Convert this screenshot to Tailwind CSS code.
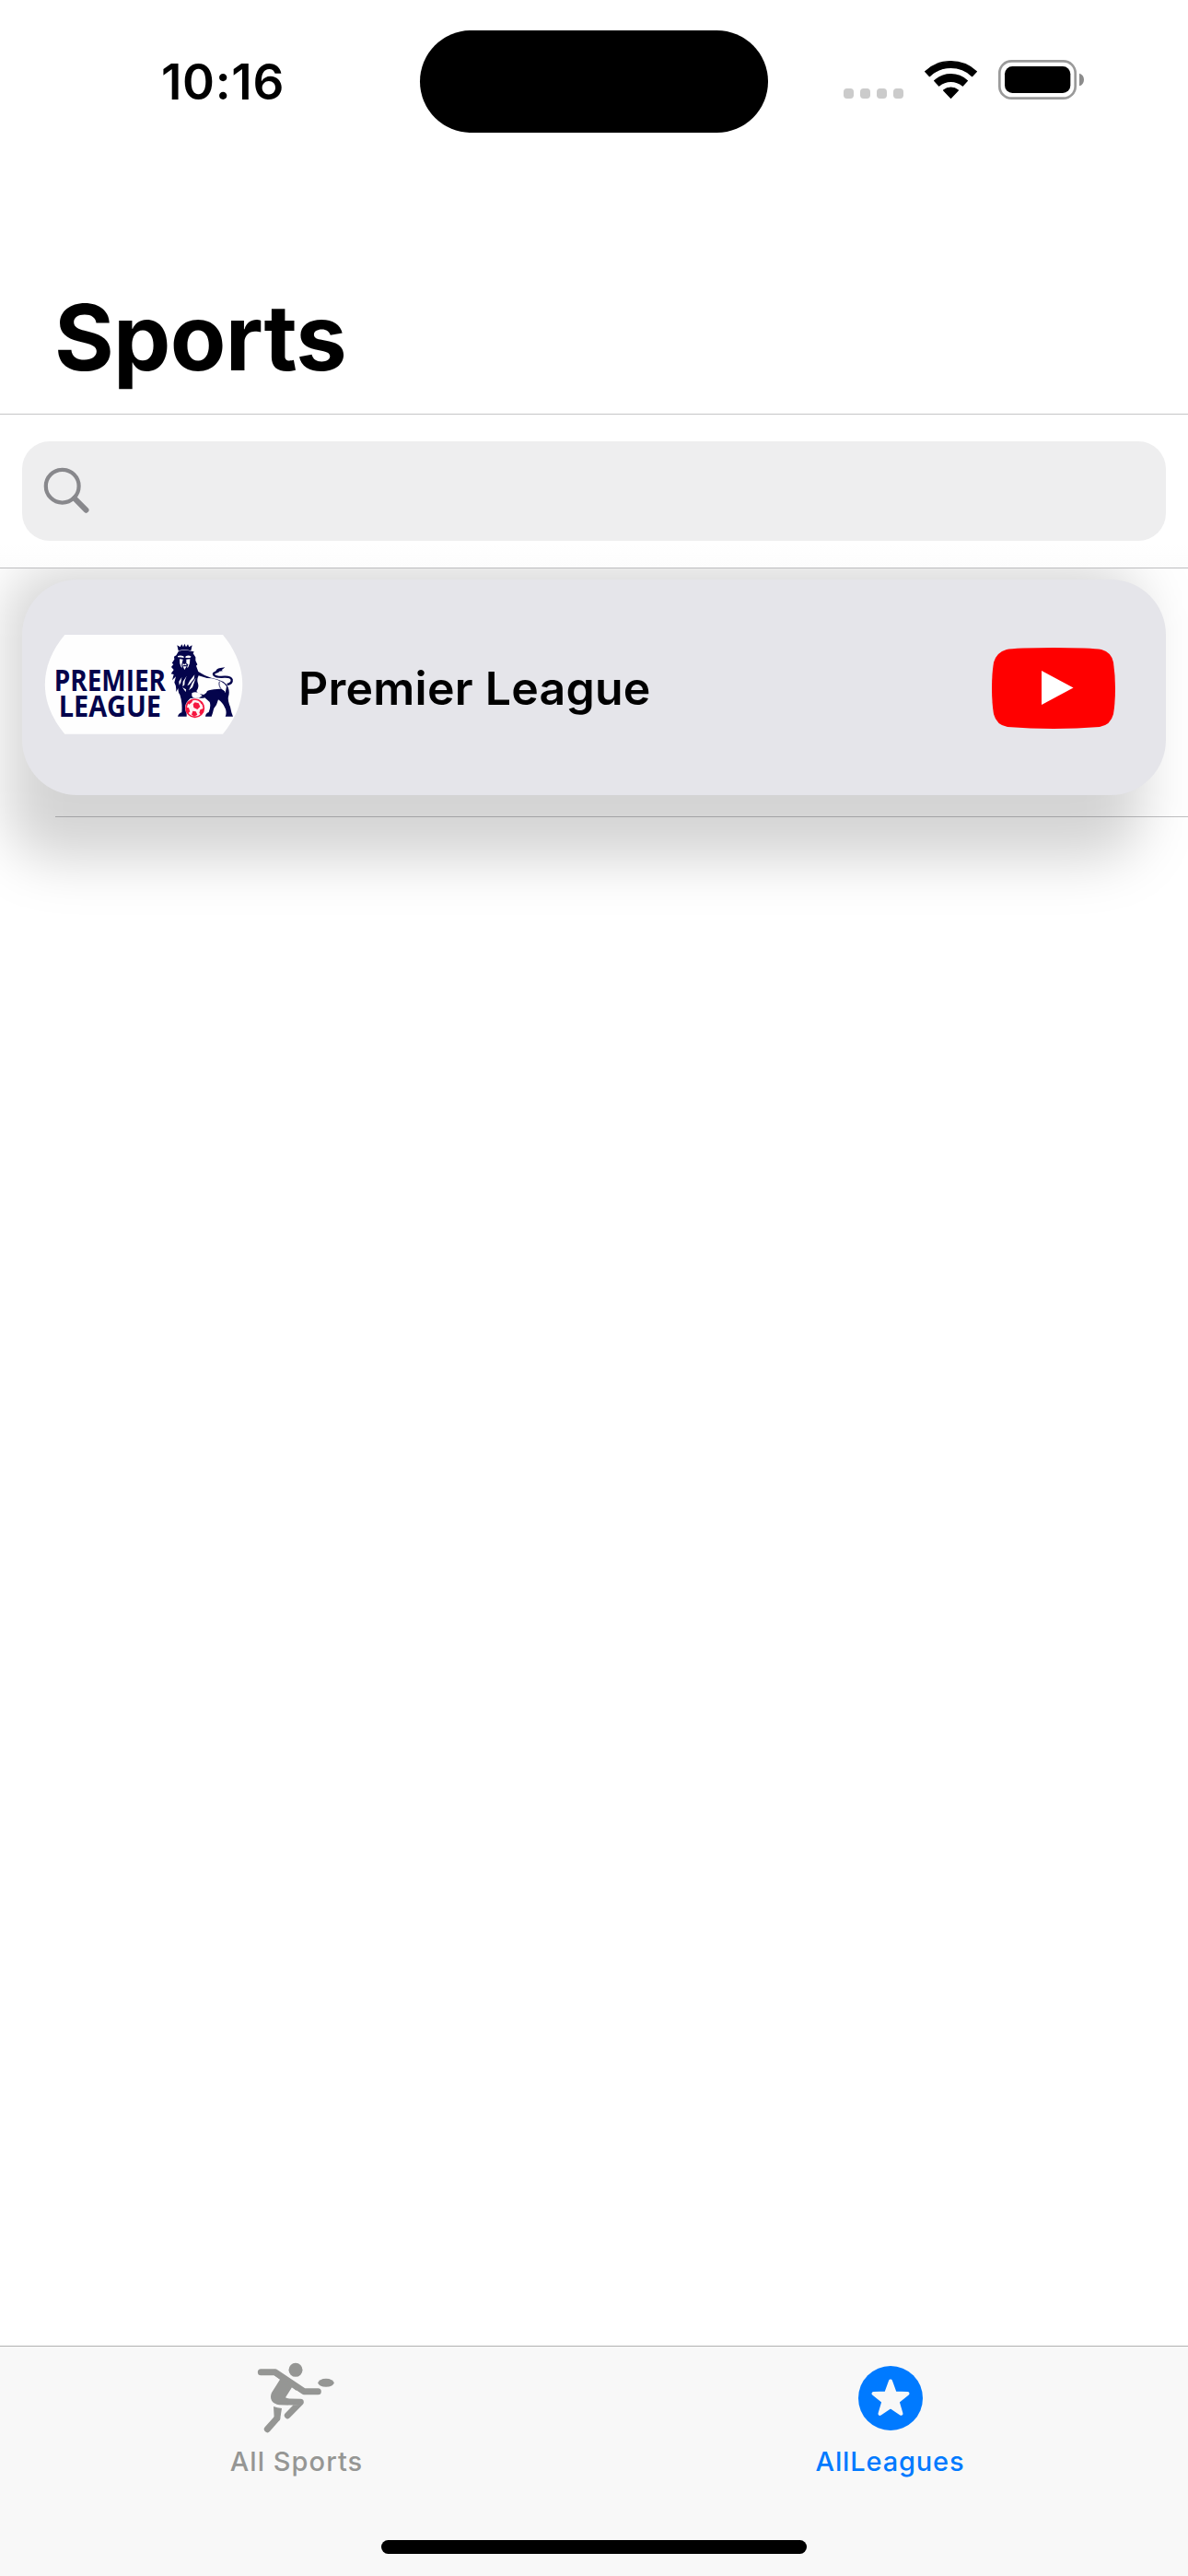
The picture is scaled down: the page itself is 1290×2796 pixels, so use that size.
<!DOCTYPE html>
<html lang="en">
<head>
<meta charset="utf-8">
<title>Sports</title>
<script src="https://cdn.jsdelivr.net/npm/@tailwindcss/browser@4"></script>
</head>
<body class="bg-white font-['Inter',sans-serif] text-black">
<div class="flex h-[2796px] w-[1290px] flex-col overflow-hidden bg-white">

  <!-- Navigation header -->
  <header class="relative z-10 bg-white">
    <div class="flex h-[177px] items-start">
      <div class="flex w-[456px] justify-center pt-[58px] pl-[28px]">
        <span class="text-[53px] leading-[62px] font-semibold tracking-[.7px]">10:16</span>
      </div>
      <div class="mt-[33px] h-[111px] w-[378px] rounded-full bg-black"></div>
      <svg class="mt-10 ml-14 h-[100px] w-[310px]" viewBox="0 0 930 300">
        <g fill="#cbcbcb">
          <rect x="78" y="168" width="33" height="33" rx="11"/><rect x="132" y="168" width="33" height="33" rx="11"/>
          <rect x="186" y="168" width="33" height="33" rx="11"/><rect x="240" y="168" width="33" height="33" rx="11"/>
        </g>
        <g fill="#000" stroke="#000" stroke-width="4" stroke-linejoin="round">
          <path d="M344 113 A122 122 0 0 1 511 113 L497 128 A101 101 0 0 0 358 128 Z"/>
          <path d="M374 143 A79 79 0 0 1 481 143 L466 159 A59 59 0 0 0 389 159 Z"/>
          <path d="M404 174 A36 36 0 0 1 451 174 L427.500 199 Z"/>
        </g>
        <rect x="586" y="79" width="247" height="121" rx="39" fill="none" stroke="#9a9a9a" stroke-width="8"/>
        <rect x="603" y="96" width="214" height="87" rx="25" fill="#000"/>
        <path d="M846 119 C866 124 866 155 846 160 Z" fill="#8c8c8c"/>
      </svg>
    </div>
    <div class="flex h-[273px] items-end border-b border-[#c5c5c7] pl-[59px]">
      <h1 class="pb-[11px] text-[99px] leading-[144px] font-bold tracking-[-.7px]">Sports</h1>
    </div>
    <div class="h-[167px] border-b border-[#bdbdbf] bg-linear-to-b from-white from-85% to-[#fcfcfc] px-6 pt-[29px]">
      <div class="flex h-[108px] items-center rounded-[30px] bg-[#eeeeef] pl-[22px]">
        <svg class="h-[54px] w-[54px]" viewBox="0 0 54 54" fill="none" stroke="#88888c">
          <circle cx="21.700" cy="21.700" r="17.900" stroke-width="4.200"/>
          <path d="M35 35 L47.500 47.700" stroke-width="6" stroke-linecap="round"/>
        </svg>
      </div>
    </div>
  </header>

  <!-- League list -->
  <main class="relative z-0 flex-1">
    <div class="absolute top-0 left-[8px] h-[316px] w-[1232px] rounded-[50px] bg-black/17 blur-[29px]"></div>
    <div class="relative h-[270px] pt-[12px]">
      <div class="mx-6 flex h-[234px] items-center rounded-[60px] bg-[#e5e5ea]">
        <svg class="mb-[12px] ml-[6px] h-[140px] w-[260px] shrink-0" viewBox="0 0 780 420">
          <path d="M121 57 H636 C721 160 721 278 636 380 H121 C35 278 35 160 121 57 Z" fill="#fefefe"/>
          <g fill="#04044c" font-family="'Open Sans','Noto Sans',sans-serif" font-weight="700" font-size="95">
            <text x="86" y="240" textLength="364" lengthAdjust="spacingAndGlyphs">PREMIER</text>
            <text x="101" y="323" textLength="334" lengthAdjust="spacingAndGlyphs">LEAGUE</text>
          </g>
          <!-- Crowned lion -->
          <g fill="#04044c">
            <path d="M487 91 L497 97 L502 88 L507 97 L511 86 L516 97 L522 88 L526 97 L536 91 L532 109 Q511 103 491 109 Z"/>
            <path d="M492 110 Q511 104 533 110 L542 112 L539 118 L547 130 L547 141 L553 154 L549 158 L556 177 Q575 190 598 197 Q645 205 653 228 Q659 244 654 258 Q651 270 660 292 L664 310 L669 323 H644 Q649 312 645 299 Q638 279 621 268 L615 285 Q605 295 603 311 L599 323 H579 Q580 313 590 309 Q598 290 593 276 Q584 268 577 262 Q566 265 557 262 L530 264 Q516 273 518 300 L518 323 H489 Q492 312 502 310 Q505 279 496 252 Q489 243 491 231 L483 243 Q486 225 478 212 L483 193 L471 205 L476 186 L467 184 L476 171 L468 162 L475 153 L470 149 L478 137 L477 128 L484 124 Z"/>
            <path d="M650 219 Q667 216 665 203 Q662 193 641 194 Q614 196 607 188 Q602 181 622 176" fill="none" stroke="#04044c" stroke-width="7"/>
            <path d="M612 180 Q613 166 628 165 L643 163 L632 172 L636 175 Q624 174 618 181 Z"/>
          </g>
          <g fill="#fefefe">
            <path d="M489 126 Q498 122 508 127 L509 132 Q498 131 489 130 Z M515 127 Q525 122 533 128 L529 132 L514 132 Z"/>
            <path d="M495 136 L506 137 L503 149 Q499 157 504 164 L500 162 Q494 151 495 136 Z M517 137 L529 136 Q530 151 523 163 L519 164 L523 154 L517 149 Z"/>
            <path d="M506 151 L511 153 L516 151 L518 157 L511 155 L504 158 Z M506 160 L518 160 L511 171 Z"/>
            <path d="M557 190 Q580 199 600 199 Q637 207 648 225 L644 247 Q638 230 617 234 Q595 235 585 240 Q584 247 574 252 Q553 251 550 240 Q559 228 555 215 Q550 204 557 190 Z"/>
            <path d="M535 247 Q545 240 558 247 L569 256 Q562 263 548 263 Q536 263 535 255 Z"/>
            <path d="M544 187 L528 207 L520 223 L527 219 L542 200 Z M518 191 L506 209 L505 226 L511 220 L512 207 Z M548 197 L536 214 L525 238 L537 228 L543 211 Z M502 195 L493 209 L494 221 L499 212 Z M504 228 L515 243 L516 235 Z"/>
          </g>
          <path d="M625 209 Q620 223 634 238 L643 243 M620 236 Q633 254 651 261" fill="none" stroke="#04044c" stroke-width="2.500"/>
          <!-- Football -->
          <circle cx="545" cy="295" r="32" fill="#fefefe"/>
          <circle cx="545" cy="296" r="29" fill="#fff0f2" stroke="#f5163f" stroke-width="5"/>
          <g fill="#f5163f">
            <path d="M545 277 L557 280 L562 291 L553 300 L541 294 L539 283 Z M522 280 Q527 270 538 269 L535 277 L526 284 Z M517 293 L525 295 L529 307 L523 313 Q515 303 517 293 Z M538 305 L548 307 L553 317 L543 323 L534 317 Z M562 301 L574 296 Q574 309 564 317 L559 311 Z M558 270 Q568 275 572 284 L565 281 Z"/>
          </g>
        </svg>
        <h2 class="ml-[34px] flex-1 pt-[2px] text-[50px] leading-[60px] font-semibold tracking-[.25px]">Premier League</h2>
        <svg class="mr-[55px] mt-[2px] h-[88px] w-[134px]" viewBox="0 0 134 88">
          <path d="M34 .5 Q67 -.5 100 .5 Q114 1 119 2 Q130 5 132 16 Q134 30 134 44 Q134 60 132 72 Q129 84 117 86 Q92 88 67 88 Q42 88 17 86 Q5 84 2 72 Q0 60 0 44 Q0 28 2 16 Q5 5 16 2 Q20 1 34 .5Z" fill="#f00"/>
          <path d="M54 25 L88.500 43.500 L54 62 Z" fill="#fff"/>
        </svg>
      </div>
      <div class="mt-[23px] ml-[60px] h-px bg-[#3c3c43]/33"></div>
    </div>
  </main>

  <!-- Tab bar -->
  <nav class="relative z-10 flex h-[250px] flex-col border-t border-[#b2b2b2] bg-[#f8f8f8]">
    <div class="grid h-[210px] grid-cols-2 text-[29px] leading-[36px] font-medium">
      <div class="flex flex-col items-center pr-px text-[#959694]">
        <svg class="mt-[14px] h-[82px] w-[90px]" viewBox="172 93 270 246" fill="currentColor">
          <circle cx="304" cy="127" r="22.500"/>
          <ellipse cx="403" cy="169" rx="26" ry="13.500"/>
          <g fill="none" stroke="currentColor" stroke-width="21" stroke-linecap="round" stroke-linejoin="round">
            <path d="M191 134.500 H238 L331 197 H377"/>
            <path d="M250 230 L320 232 L278 275"/>
            <path d="M243 285 L212 320"/>
          </g>
          <path d="M238 134 L312 184 L306 194 L292 184 L271 217 L285 223 L280 241 L250 240 C226 238 218 219 226 201 L253 158 L232 143 Z"/>
          <path d="M232 246 Q244 251 259 252 L254 284 L250 293 L234 282 Z"/>
        </svg>
        <span class="mt-[11px] tracking-[1.05px]">All Sports</span>
      </div>
      <div class="flex flex-col items-center pr-[2px] text-[#007aff]">
        <svg class="mt-[14px] h-[82px] w-[90px]" viewBox="-45 -42 90 82">
          <circle r="35" fill="currentColor"/>
          <path d="M0 -18.500 L4.800 -5.400 L18.500 -5 L7.600 3.600 L11.500 16.800 L0 9 L-11.500 16.800 L-7.600 3.600 L-18.500 -5 L-4.800 -5.400 Z" fill="#f8f8f8" stroke="#f8f8f8" stroke-width="4" stroke-linejoin="round"/>
        </svg>
        <span class="mt-[11px] tracking-[.85px]">AllLeagues</span>
      </div>
    </div>
    <div class="mx-auto h-[15px] w-[462px] rounded-full bg-black"></div>
  </nav>
</div>
</body>
</html>
